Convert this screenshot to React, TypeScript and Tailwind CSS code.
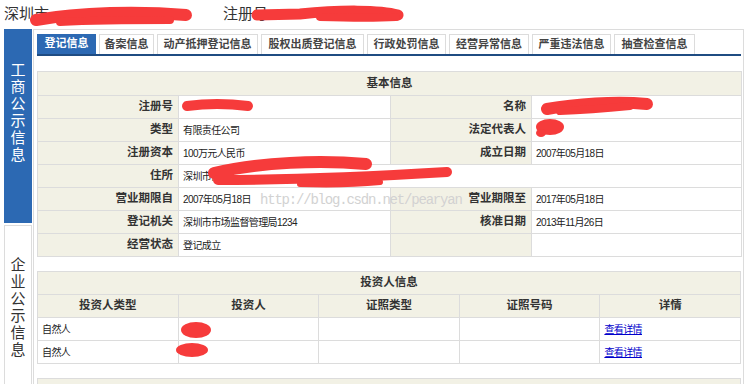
import React from "react";

const tabs = [
  { name: "登记信息", w: "w-[59px]", active: true },
  { name: "备案信息", w: "w-[55px]" },
  { name: "动产抵押登记信息", w: "w-[101px]" },
  { name: "股权出质登记信息", w: "w-[103px]" },
  { name: "行政处罚信息", w: "w-[79px]" },
  { name: "经营异常信息", w: "w-[80px]" },
  { name: "严重违法信息", w: "w-[79px]" },
  { name: "抽查检查信息", w: "w-[81px]" },
];

const cell = "border border-[#dcdcdc]";
const label = `${cell} bg-[#f2f1e5] text-right pr-[5px] font-bold text-[11.5px] text-[#333]`;
const value = `${cell} bg-white pl-[4px] text-[10px] tracking-[-0.6px] text-[#222]`;
const head = `${cell} bg-[#f2f1e5] text-center font-bold text-[11.5px] text-[#333]`;

function VerticalText({ text, className }: { text: string; className: string }) {
  return (
    <div className={`flex flex-col items-center ${className}`}>
      {text.split("").map((c, i) => (
        <span key={i} className="block text-[15px] leading-[17px]">
          {c}
        </span>
      ))}
    </div>
  );
}

function Scribbles() {
  return (
    <svg
      className="absolute left-0 top-0 pointer-events-none"
      width="753"
      height="384"
      viewBox="0 0 753 384"
      fill="none"
    >
      <g stroke="#f63b3b" strokeLinecap="round" strokeLinejoin="round">
        <path d="M36 20 C80 12 140 11 186 15" strokeWidth="12" />
        <path d="M60 22 C100 20 140 20 170 20" strokeWidth="8" />
        <path d="M257 15 L300 14 C340 10 380 10 398 15" strokeWidth="11" />
        <path d="M320 17 C350 18 380 18 396 17" strokeWidth="8" />
        <path d="M187 106 C210 103 232 104 248 106" strokeWidth="10" />
        <path d="M547 109 C575 104 615 101 647 104" strokeWidth="12" />
        <path d="M560 111 C590 110 610 108 630 106" strokeWidth="8" />
        <path d="M214 173 C260 162 320 160 366 164" strokeWidth="12" />
        <path d="M218 180 C300 180 380 176 447 172" strokeWidth="10" />
        <path d="M300 184 C330 185 360 184 380 182" strokeWidth="6" />
      </g>
      <g fill="#f63b3b">
        <ellipse cx="550" cy="127" rx="14" ry="8" />
        <ellipse cx="541" cy="133" rx="5" ry="4" />
        <ellipse cx="196" cy="330" rx="15" ry="8" />
        <ellipse cx="192" cy="350" rx="16" ry="7" />
      </g>
    </svg>
  );
}

export default function App() {
  return (
    <div className="relative w-[753px] h-[384px] overflow-hidden bg-white font-['Liberation_Sans','Noto_Sans_CJK_SC',sans-serif] text-[#333]">
      {/* header */}
      <div className="flex items-center h-[29px] pl-[4px] text-[15px] text-[#333]">
        <span className="w-[219px]">深圳市</span>
        <span>注册号</span>
      </div>

      <div className="flex pl-[4px]">
        {/* left nav */}
        <div className="flex flex-col w-[28px] shrink-0">
          <div className="h-[194px] bg-[#2c69b3]">
            <VerticalText text="工商公示信息" className="pt-[32px] text-white" />
          </div>
          <div className="mt-[2px] h-[200px] border border-b-0 border-[#dcdcdc] bg-white">
            <VerticalText text="企业公示信息" className="pt-[30px] text-[#333]" />
          </div>
        </div>

        {/* main panel */}
        <div className="ml-[1px] w-[711px] h-[400px] border border-[#dcdcdc] pl-[3px] pr-[2px] pt-[4px]">
          <div className="flex gap-[3px] h-[20px]">
            {tabs.map((t) => (
              <div
                key={t.name}
                className={`${t.w} h-[20px] text-center text-[11px] leading-[19px] font-bold ${
                  t.active
                    ? "bg-[#2c69b3] text-white"
                    : "bg-white text-[#444] border border-b-0 border-[#dcdcdc]"
                }`}
              >
                {t.name}
              </div>
            ))}
          </div>
          <div className="h-[2px] bg-[#1f4c82]" />

          {/* basic info */}
          <table className="mt-[15px] w-[704px] table-fixed border-collapse">
            <colgroup>
              <col className="w-[141px]" />
              <col className="w-[212px]" />
              <col className="w-[141px]" />
              <col className="w-[210px]" />
            </colgroup>
            <tbody>
              <tr className="h-[24px]">
                <td colSpan={4} className={head}>基本信息</td>
              </tr>
              <tr className="h-[23px]">
                <td className={label}>注册号</td>
                <td className={value}></td>
                <td className={label}>名称</td>
                <td className={value}></td>
              </tr>
              <tr className="h-[23px]">
                <td className={label}>类型</td>
                <td className={value}>有限责任公司</td>
                <td className={label}>法定代表人</td>
                <td className={value}></td>
              </tr>
              <tr className="h-[23px]">
                <td className={label}>注册资本</td>
                <td className={value}>100万元人民币</td>
                <td className={label}>成立日期</td>
                <td className={value}>2007年05月18日</td>
              </tr>
              <tr className="h-[23px]">
                <td className={label}>住所</td>
                <td colSpan={3} className={value}>深圳市南</td>
              </tr>
              <tr className="h-[23px]">
                <td className={label}>营业期限自</td>
                <td className={value}>2007年05月18日</td>
                <td className={label}>营业期限至</td>
                <td className={value}>2017年05月18日</td>
              </tr>
              <tr className="h-[23px]">
                <td className={label}>登记机关</td>
                <td className={value}>深圳市市场监督管理局1234</td>
                <td className={label}>核准日期</td>
                <td className={value}>2013年11月26日</td>
              </tr>
              <tr className="h-[23px]">
                <td className={label}>经营状态</td>
                <td className={value}>登记成立</td>
                <td className={label}></td>
                <td className={value}></td>
              </tr>
            </tbody>
          </table>

          {/* investors */}
          <table className="mt-[14px] w-[704px] table-fixed border-collapse">
            <tbody>
              <tr className="h-[23px]">
                <td colSpan={5} className={head}>投资人信息</td>
              </tr>
              <tr className="h-[23px]">
                <td className={head}>投资人类型</td>
                <td className={head}>投资人</td>
                <td className={head}>证照类型</td>
                <td className={head}>证照号码</td>
                <td className={head}>详情</td>
              </tr>
              {["", ""].map((_, i) => (
                <tr key={i} className="h-[23px]">
                  <td className={value}>自然人</td>
                  <td className={value}></td>
                  <td className={value}></td>
                  <td className={value}></td>
                  <td className={value}>
                    <a href="#" className="text-[#0000cc] underline">查看详情</a>
                  </td>
                </tr>
              ))}
            </tbody>
          </table>

          <table className="mt-[14px] w-[704px] table-fixed border-collapse">
            <tbody>
              <tr className="h-[23px]">
                <td className={head}></td>
              </tr>
            </tbody>
          </table>
        </div>
      </div>

      <div className="absolute left-[260px] top-[190px] text-[14px] tracking-[-1.2px] text-[#d2d2d2] font-['Liberation_Mono',monospace] pointer-events-none">
        http://blog.csdn.net/pearyan
      </div>

      <Scribbles />
    </div>
  );
}
